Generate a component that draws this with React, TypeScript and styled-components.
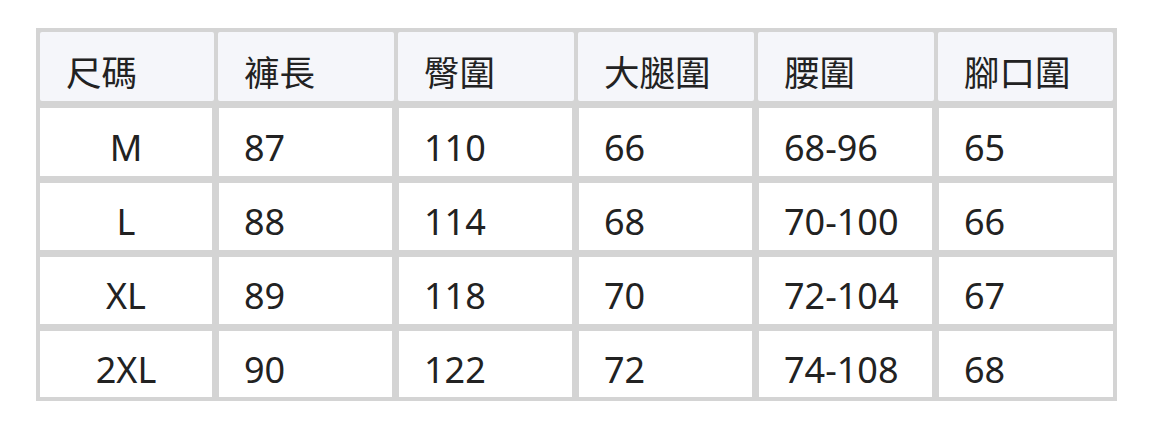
import { createGlobalStyle, styled } from 'styled-components';

const GlobalStyle = createGlobalStyle`
  html, body {
    margin: 0;
    padding: 0;
    background: #fff;
  }
  body {
    font-family: 'Noto Sans', 'Noto Sans CJK TC', sans-serif;
    color: #222;
  }
`;

const Page = styled.div`
  padding: 28px 0 0 36px;
`;

const SizeTable = styled.div`
  width: 1081px;
  box-sizing: border-box;
  border: 4px solid #d4d4d4;
  background: #d4d4d4;
  display: flex;
  flex-direction: column;
  gap: 7px;
`;

const HeadRow = styled.div`
  display: grid;
  grid-template-columns: 174px 176px 176px 176px 176px 1fr;
  column-gap: 4px;
  height: 69px;
`;

const BodyRow = styled.div<{ $height: number }>`
  display: grid;
  grid-template-columns: 172px 173px 173px 173px 173px 1fr;
  column-gap: 7px;
  height: ${({ $height }) => $height}px;
`;

const HeadCell = styled.div`
  display: flex;
  align-items: center;
  padding: 13px 0 0 26px;
  background: #f5f6fa;
  border-radius: 2px;
  font-size: 35.5px;
  line-height: 1;
`;

const Cell = styled.div<{ $center?: boolean }>`
  display: flex;
  align-items: center;
  justify-content: ${({ $center }) => ($center ? 'center' : 'flex-start')};
  padding: 11px 0 0 ${({ $center }) => ($center ? '0' : '25px')};
  background: #fff;
  font-size: 36px;
  line-height: 1;
`;

const headers = ['尺碼', '褲長', '臀圍', '大腿圍', '腰圍', '腳口圍'];

const rows = [
  ['M', '87', '110', '66', '68-96', '65'],
  ['L', '88', '114', '68', '70-100', '66'],
  ['XL', '89', '118', '70', '72-104', '67'],
  ['2XL', '90', '122', '72', '74-108', '68'],
];

const rowHeights = [68, 67, 67, 66];

export default function App() {
  return (
    <>
      <GlobalStyle />
      <Page>
        <SizeTable>
          <HeadRow>
            {headers.map((h) => (
              <HeadCell key={h}>{h}</HeadCell>
            ))}
          </HeadRow>
          {rows.map((row, i) => (
            <BodyRow key={row[0]} $height={rowHeights[i]}>
              {row.map((v, j) => (
                <Cell key={j} $center={j === 0}>
                  {v}
                </Cell>
              ))}
            </BodyRow>
          ))}
        </SizeTable>
      </Page>
    </>
  );
}
